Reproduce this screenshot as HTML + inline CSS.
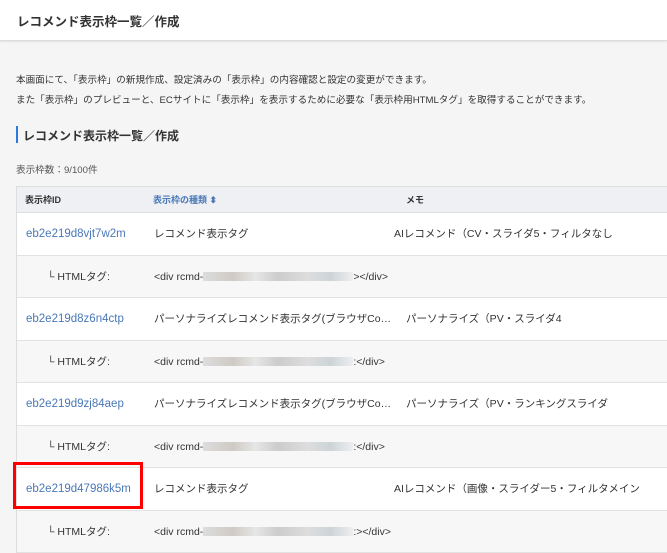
<!DOCTYPE html>
<html><head><meta charset="utf-8"><style>
*{margin:0;padding:0;box-sizing:border-box}
body{width:667px;height:551px;overflow:hidden;background:#f5f5f5;font-family:"Liberation Sans","Noto Sans CJK JP",sans-serif;color:#333;position:relative}
.hd{position:absolute;left:0;top:0;width:667px;height:41px;background:#fff;border-bottom:1px solid #ddd;box-shadow:0 1px 2px rgba(0,0,0,.08)}
.hd span{position:absolute;left:17px;top:11px;font-size:12.5px;font-weight:bold;color:#333}
.t{position:absolute;font-size:9.6px;white-space:nowrap}
.tbl{position:absolute;left:16px;top:186px;width:660px;border-left:1px solid #ddd}
.r{position:relative;height:42.5px;border-bottom:1px solid #e2e2e2;font-size:10.5px}
.r span{position:absolute;top:0;height:42px;line-height:42px;white-space:nowrap}
.w{background:#fff}.g{background:#f7f7f7}
.h{height:27px;background:#eef0f3;border-top:1px solid #ddd;border-bottom:1px solid #ddd;font-size:9px;font-weight:bold}
.h span{height:26px;line-height:26px}
.id{color:#4a78b8;left:9px;font-size:11.5px}
.blur{display:inline-block;width:150px;height:9px;vertical-align:middle;background:linear-gradient(90deg,#ddd,#cfcac4 20%,#e6e6e6 35%,#ccc 50%,#ddd 70%,#ccd4d8 85%,#eee)}
</style></head><body>
<div class="hd"><span>レコメンド表示枠一覧／作成</span></div>
<div class="t" style="left:16px;top:72px">本画面にて、「表示枠」の新規作成、設定済みの「表示枠」の内容確認と設定の変更ができます。</div>
<div class="t" style="left:16px;top:92px">また「表示枠」のプレビューと、ECサイトに「表示枠」を表示するために必要な「表示枠用HTMLタグ」を取得することができます。</div>
<div style="position:absolute;left:16px;top:126px;width:2px;height:17px;background:#2a7ae2"></div>
<div class="t" style="left:23px;top:127px;font-size:12px;font-weight:bold">レコメンド表示枠一覧／作成</div>
<div class="t" style="left:16px;top:162px;color:#555">表示枠数：9/100件</div>
<div class="tbl">
<div class="r h"><span style="left:8px">表示枠ID</span><span style="left:136px;color:#4a78b8">表示枠の種類 ⬍</span><span style="left:389px">メモ</span></div>
<div class="r w"><span class="id">eb2e219d8vjt7w2m</span><span style="left:137px">レコメンド表示タグ</span><span style="left:377px">AIレコメンド（CV・スライダ5・フィルタなし</span></div>
<div class="r g"><span style="left:30px">└ HTMLタグ:</span><span style="left:137px">&lt;div rcmd-<i class="blur"></i>&gt;&lt;/div&gt;</span></div>
<div class="r w"><span class="id">eb2e219d8z6n4ctp</span><span style="left:137px">パーソナライズレコメンド表示タグ(ブラウザCo…</span><span style="left:389px">パーソナライズ（PV・スライダ4</span></div>
<div class="r g"><span style="left:30px">└ HTMLタグ:</span><span style="left:137px">&lt;div rcmd-<i class="blur"></i>:&lt;/div&gt;</span></div>
<div class="r w"><span class="id">eb2e219d9zj84aep</span><span style="left:137px">パーソナライズレコメンド表示タグ(ブラウザCo…</span><span style="left:389px">パーソナライズ（PV・ランキングスライダ</span></div>
<div class="r g"><span style="left:30px">└ HTMLタグ:</span><span style="left:137px">&lt;div rcmd-<i class="blur"></i>:&lt;/div&gt;</span></div>
<div class="r w"><span class="id">eb2e219d47986k5m</span><span style="left:137px">レコメンド表示タグ</span><span style="left:377px">AIレコメンド（画像・スライダー5・フィルタメイン</span></div>
<div class="r g"><span style="left:30px">└ HTMLタグ:</span><span style="left:137px">&lt;div rcmd-<i class="blur"></i>:&gt;&lt;/div&gt;</span></div>
</div>
<div style="position:absolute;left:13px;top:462px;width:130px;height:47px;border:3px solid #f00"></div>
</body></html>
